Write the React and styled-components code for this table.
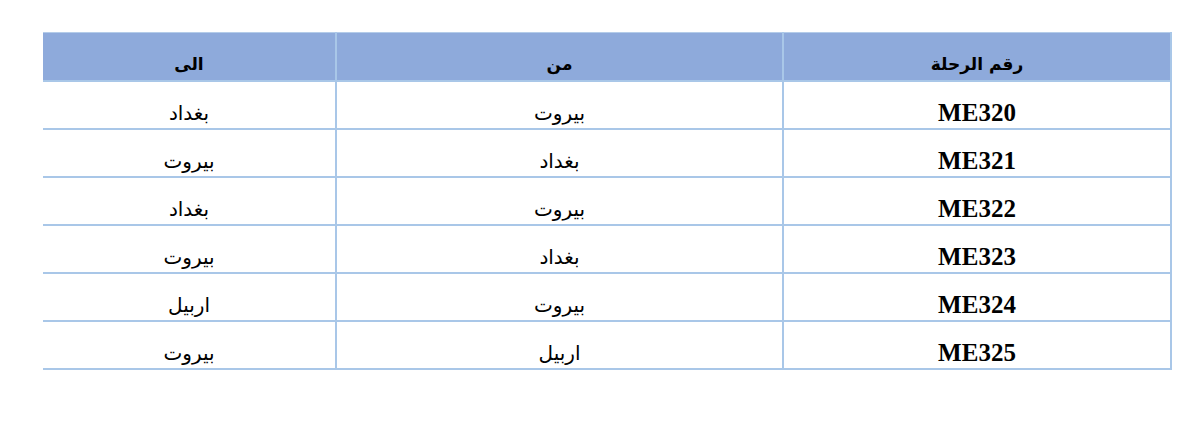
import styled, { createGlobalStyle } from 'styled-components';

const GlobalStyle = createGlobalStyle`
  html, body {
    margin: 0;
    padding: 0;
    background: #fff;
  }
`;

const Page = styled.div`
  padding: 32px 29px 0 43px;
`;

const Table = styled.table`
  direction: rtl;
  width: 1128px;
  border-collapse: collapse;
  table-layout: fixed;
  font-family: "DejaVu Sans", "Liberation Sans", sans-serif;
  color: #000;
`;

const HeadCell = styled.th`
  background: #8eaadb;
  height: 48px;
  padding: 0 0 6px 0;
  box-sizing: border-box;
  font-size: 17px;
  font-weight: bold;
  text-align: center;
  vertical-align: bottom;
  border-top: 1px solid #b4cce9;
  border-bottom: 2px solid #a9c7e8;
  border-left: 2px solid #a9c7e8;
  border-right: 2px solid #a9c7e8;
  &:last-child { border-left: none; }
`;

const Cell = styled.td`
  height: 48px;
  padding: 0 0 ${p => (p.$code ? '1px' : '3px')} 0;
  box-sizing: border-box;
  text-align: center;
  vertical-align: bottom;
  font-size: ${p => (p.$code ? '25px' : '20px')};
  font-weight: ${p => (p.$code ? 'bold' : 'normal')};
  font-family: ${p => (p.$code ? '"Liberation Serif", serif' : 'inherit')};
  border-bottom: 2px solid #a9c7e8;
  border-left: 2px solid #a9c7e8;
  border-right: 2px solid #a9c7e8;
  &:last-child { border-left: none; }
`;

const flights = [
  ['ME320', 'بيروت', 'بغداد'],
  ['ME321', 'بغداد', 'بيروت'],
  ['ME322', 'بيروت', 'بغداد'],
  ['ME323', 'بغداد', 'بيروت'],
  ['ME324', 'بيروت', 'اربيل'],
  ['ME325', 'اربيل', 'بيروت'],
];

export default function App() {
  return (
    <>
      <GlobalStyle />
      <Page>
        <Table>
          <colgroup>
            <col style={{ width: 388 }} />
            <col style={{ width: 447 }} />
            <col style={{ width: 293 }} />
          </colgroup>
          <thead>
            <tr>
              <HeadCell>رقم الرحلة</HeadCell>
              <HeadCell>من</HeadCell>
              <HeadCell>الى</HeadCell>
            </tr>
          </thead>
          <tbody>
            {flights.map(([code, from, to]) => (
              <tr key={code}>
                <Cell $code>{code}</Cell>
                <Cell>{from}</Cell>
                <Cell>{to}</Cell>
              </tr>
            ))}
          </tbody>
        </Table>
      </Page>
    </>
  );
}
